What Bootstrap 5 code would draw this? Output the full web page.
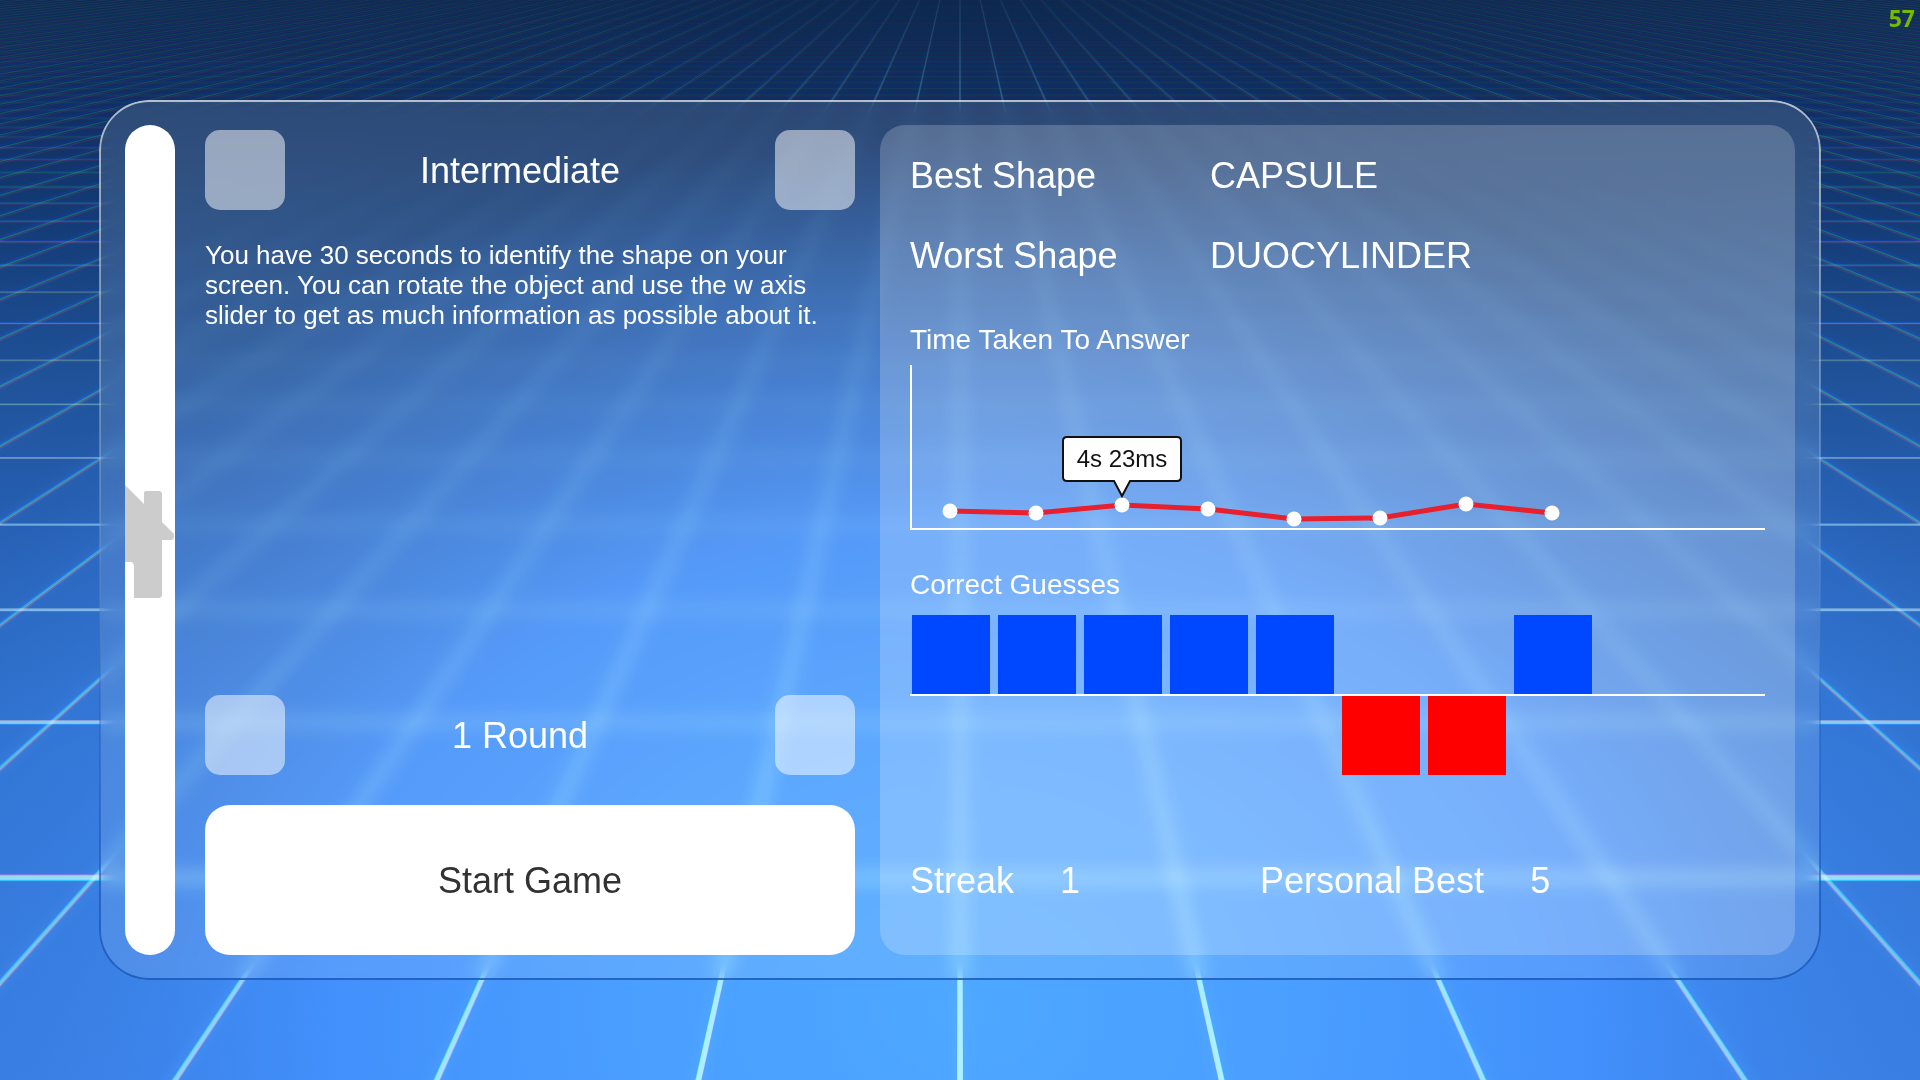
<!DOCTYPE html>
<html lang="en">
<head>
<meta charset="utf-8">
<meta name="viewport" content="width=device-width, initial-scale=1">
<title>Shape Game</title>
<link href="https://cdn.jsdelivr.net/npm/bootstrap@5.3.0/dist/css/bootstrap.min.css" rel="stylesheet">
<style>
body{font-family:"Liberation Sans",Arial,sans-serif;color:#fff;background:#0d264c;overflow:hidden}
.scene{position:fixed;inset:0;width:100%;height:100%;z-index:-1}
.scene .lines{mix-blend-mode:screen}
.stage{padding:100px}
.glass{position:relative;border-radius:50px;padding:25px;background:rgba(255,255,255,.11);backdrop-filter:blur(9px)}
.glass::before{content:"";position:absolute;inset:0 -1px;border-radius:50px;padding:2px;pointer-events:none;
 background:linear-gradient(rgba(255,255,255,.65),rgba(255,255,255,.3) 30%,rgba(20,80,170,.3) 70%,rgba(20,85,180,.8));
 -webkit-mask:linear-gradient(#000 0 0) content-box,linear-gradient(#000 0 0);-webkit-mask-composite:xor;mask-composite:exclude}
.home-bar{width:50px;border-radius:25px;background:#fff;border:0;padding:0;margin-right:30px}
.setup{flex:650 1 0;margin-right:25px;padding-top:5px}
.stats{flex:855 1 0;border-radius:25px;background:rgba(255,255,255,.2);padding:10px 30px 0}
.step-btn{width:80px;height:80px;border:0;border-radius:15px;background:rgba(255,255,255,.5)}
.fs-big{font-size:36px;line-height:40px}
.choice{padding:2px 20px 0 0}
.about{font-size:26px;line-height:30px;margin:30px 0 0}
.start-btn{height:150px;border-radius:25px;background:#fff;color:#323232;margin-top:30px;padding:8px 0 6px}
.start-btn:hover{background:#eee}
.stat-row{height:80px;margin:0;padding-top:2px}
.stat-name{width:300px;font-weight:400}
.chart-title{font-size:28px;line-height:40px;font-weight:400;margin:0}
.chart-title.first{margin-top:25px}
.time-chart{height:165px;border:solid #fff;border-width:0 0 2px 2px;margin:5px 0 35px}
.time-chart svg{display:block;overflow:visible}
.guesses{height:160px;margin-top:10px;gap:8px;padding-left:2px;
 background:linear-gradient(#fff,#fff) 0 79px/100% 2px no-repeat}
.guess{width:78px;height:79px;background:#0048ff}
.guess.miss{background:red;align-self:flex-end}
.streaks{height:150px;padding-top:2px}
.streak-cell{width:350px;gap:46px}
.fps{position:fixed;top:0;right:5px;font:700 23px/36px "Noto Sans",sans-serif;color:#76b900}
</style>
<script src="https://cdn.jsdelivr.net/npm/bootstrap@5.3.0/dist/js/bootstrap.bundle.min.js"></script>
</head>
<body>
<svg class="scene" viewBox="0 0 1920 1080" preserveAspectRatio="none" aria-hidden="true">
 <defs>
  <linearGradient id="sky" x1="0" y1="0" x2="0" y2="1">
   <stop offset="0" stop-color="#0d264c"/><stop offset=".1" stop-color="#102e60"/><stop offset=".2" stop-color="#133a74"/>
   <stop offset=".35" stop-color="#1f5299"/><stop offset=".5" stop-color="#2761b5"/><stop offset=".7" stop-color="#2f72cf"/><stop offset="1" stop-color="#387ce0"/>
  </linearGradient>
  <radialGradient id="glow" gradientUnits="userSpaceOnUse" cx="0" cy="0" r="1" gradientTransform="translate(960 1010) scale(1160 880)">
   <stop offset="0" stop-color="#4ea8ff"/><stop offset=".3" stop-color="#4a9eff"/><stop offset=".55" stop-color="#4392ff" stop-opacity=".9"/><stop offset=".8" stop-color="#3d84ea" stop-opacity=".4"/><stop offset="1" stop-color="#387ce0" stop-opacity="0"/>
  </radialGradient>
  <linearGradient id="fadeRays" gradientUnits="userSpaceOnUse" x1="0" y1="0" x2="0" y2="1080">
   <stop offset="0" stop-color="#fff" stop-opacity=".16"/><stop offset=".12" stop-color="#fff" stop-opacity=".44"/><stop offset=".35" stop-color="#fff" stop-opacity=".62"/><stop offset=".8" stop-color="#fff" stop-opacity=".88"/><stop offset="1" stop-color="#fff" stop-opacity=".95"/>
  </linearGradient>
  <linearGradient id="fadeRows" gradientUnits="userSpaceOnUse" x1="0" y1="0" x2="0" y2="1080">
   <stop offset="0" stop-color="#fff" stop-opacity=".03"/><stop offset=".1" stop-color="#fff" stop-opacity=".08"/><stop offset=".2" stop-color="#fff" stop-opacity=".24"/><stop offset=".35" stop-color="#fff" stop-opacity=".4"/><stop offset=".55" stop-color="#fff" stop-opacity=".62"/><stop offset=".8" stop-color="#fff" stop-opacity=".85"/><stop offset="1" stop-color="#fff" stop-opacity=".95"/>
  </linearGradient>
  <radialGradient id="edges" gradientUnits="userSpaceOnUse" cx="0" cy="0" r="1" gradientTransform="translate(960 1000) scale(1080 1300)">
   <stop offset=".3" stop-color="#000" stop-opacity="0"/><stop offset="1" stop-color="#000" stop-opacity=".45"/>
  </radialGradient>
  <mask id="depthRays" maskUnits="userSpaceOnUse" x="-20" y="-20" width="1960" height="1120"><rect x="-20" y="-20" width="1960" height="1120" fill="url(#fadeRays)"/><rect x="-20" y="-20" width="1960" height="1120" fill="url(#edges)"/></mask>
  <mask id="depthRows" maskUnits="userSpaceOnUse" x="-20" y="-20" width="1960" height="1120"><rect x="-20" y="-20" width="1960" height="1120" fill="url(#fadeRows)"/></mask>
  <filter id="soft" x="0" y="0" width="1" height="1"><feGaussianBlur stdDeviation="0.7"/></filter>
  <filter id="halo" x="0" y="0" width="1" height="1"><feGaussianBlur stdDeviation="7"/></filter>
 </defs>
 <rect width="1920" height="1080" fill="url(#sky)"/>
 <rect width="1920" height="1080" fill="url(#glow)"/>
 <g mask="url(#depthRays)" opacity=".55"><path class="rays" fill="#62bcff" filter="url(#halo)"/></g>
 <g mask="url(#depthRays)" class="lines" filter="url(#soft)">
  <path class="rays lines" fill="#900000" transform="translate(960 540) scale(.997) translate(-960 -540)"/>
  <path class="rays lines" fill="#00e000"/>
  <path class="rays lines" fill="#0000ff" transform="translate(960 540) scale(1.0035) translate(-960 -540)"/>
 </g>
 <g mask="url(#depthRows)" class="lines" filter="url(#soft)">
  <path class="rows lines" fill="#900000" transform="translate(960 540) scale(.997) translate(-960 -540)"/>
  <path class="rows lines" fill="#00d800"/>
  <path class="rows lines" fill="#0000ff" transform="translate(960 540) scale(1.0035) translate(-960 -540)"/>
 </g>
</svg>

<div class="fps">57</div>

<main class="stage d-flex vh-100">
 <div class="glass d-flex flex-fill">
  <button class="home-bar d-flex align-items-center overflow-hidden flex-shrink-0" type="button" aria-label="Home">
   <svg width="50" height="116" viewBox="0 0 50 116" fill="#ccc"><path d="M0 3L19 22V11Q19 9 21 9H35L37 11V40L49 52V56L47 58H37V114L35 116H9V83L7 80H0Z"/></svg>
  </button>

  <section class="setup d-flex flex-column">
   <div class="d-flex align-items-center">
    <button class="step-btn" type="button" aria-label="Previous difficulty"></button>
    <div class="choice fs-big flex-fill text-center">Intermediate</div>
    <button class="step-btn" type="button" aria-label="Next difficulty"></button>
   </div>
   <p class="about">You have 30 seconds to identify the shape on your screen. You can rotate the object and use the w axis slider to get as much information as possible about it.</p>
   <div class="d-flex align-items-center mt-auto">
    <button class="step-btn" type="button" aria-label="Fewer rounds"></button>
    <div class="choice fs-big flex-fill text-center">1 Round</div>
    <button class="step-btn" type="button" aria-label="More rounds"></button>
   </div>
   <button class="btn start-btn fs-big w-100" type="button">Start Game</button>
  </section>

  <section class="stats d-flex flex-column">
   <dl class="fs-big mb-0">
    <div class="stat-row d-flex align-items-center"><dt class="stat-name">Best Shape</dt><dd class="mb-0">CAPSULE</dd></div>
    <div class="stat-row d-flex align-items-center"><dt class="stat-name">Worst Shape</dt><dd class="mb-0">DUOCYLINDER</dd></div>
   </dl>
   <h2 class="chart-title first">Time Taken To Answer</h2>
   <div class="time-chart">
    <svg width="100%" height="163" role="img" aria-label="Time taken to answer">
     <polyline points="38,146 124,148 210,140 296,144 382,154 468,153 554,139 640,148" fill="none" stroke="#e8202e" stroke-width="5"/>
     <g fill="#fff"><circle cx="38" cy="146" r="7.5"/><circle cx="124" cy="148" r="7.5"/><circle cx="210" cy="140" r="7.5"/><circle cx="296" cy="144" r="7.5"/><circle cx="382" cy="154" r="7.5"/><circle cx="468" cy="153" r="7.5"/><circle cx="554" cy="139" r="7.5"/><circle cx="640" cy="148" r="7.5"/></g>
     <path d="M155 72H265Q269 72 269 76V112Q269 116 265 116H218L210 131L202 116H155Q151 116 151 112V76Q151 72 155 72Z" fill="#fff" stroke="#111" stroke-width="2"/>
     <text x="210" y="102" text-anchor="middle" font-size="24" fill="#111">4s 23ms</text>
    </svg>
   </div>
   <h2 class="chart-title">Correct Guesses</h2>
   <div class="guesses d-flex align-items-start">
    <div class="guess"></div><div class="guess"></div><div class="guess"></div><div class="guess"></div><div class="guess"></div><div class="guess miss"></div><div class="guess miss"></div><div class="guess"></div>
   </div>
   <div class="streaks fs-big d-flex align-items-center mt-auto">
    <div class="streak-cell d-flex"><span>Streak</span><span>1</span></div>
    <div class="streak-cell d-flex"><span>Personal Best</span><span>5</span></div>
   </div>
  </section>
 </div>
</main>
<script>
// Floor grid in one-point perspective: horizon above the top edge, rows spaced by 1/distance.
const horizon = -91, cx = 960;
let rows = '', rays = '';
for (let k = -1; k < 52; k++) {
  const depth = 5066 / (5.228 + k), y = horizon + depth;
  const h = Math.max(5.5 * (depth / 969) ** 2, Math.min(1.3, depth / 170)) / 2;
  rows += `M-20 ${y - h}H1940V${y + h}H-20Z`;
}
for (let n = -60; n <= 60; n++) {
  const at = y => cx + n * 0.2235 * (y - horizon);
  const top = -10, bottom = 1110;
  const w = y => Math.max(0.0025 * (y - horizon), 0.5) * Math.sqrt(1 + (n * 0.222) ** 2 * Math.min(1, Math.abs(n) / 12) * .4);
  rays += `M${at(top) - w(top)} ${top}L${at(top) + w(top)} ${top}L${at(bottom) + w(bottom)} ${bottom}L${at(bottom) - w(bottom)} ${bottom}Z`;
}
document.querySelectorAll('.rows').forEach(p => p.setAttribute('d', rows));
document.querySelectorAll('.rays').forEach(p => p.setAttribute('d', rays));
</script>
</body>
</html>
